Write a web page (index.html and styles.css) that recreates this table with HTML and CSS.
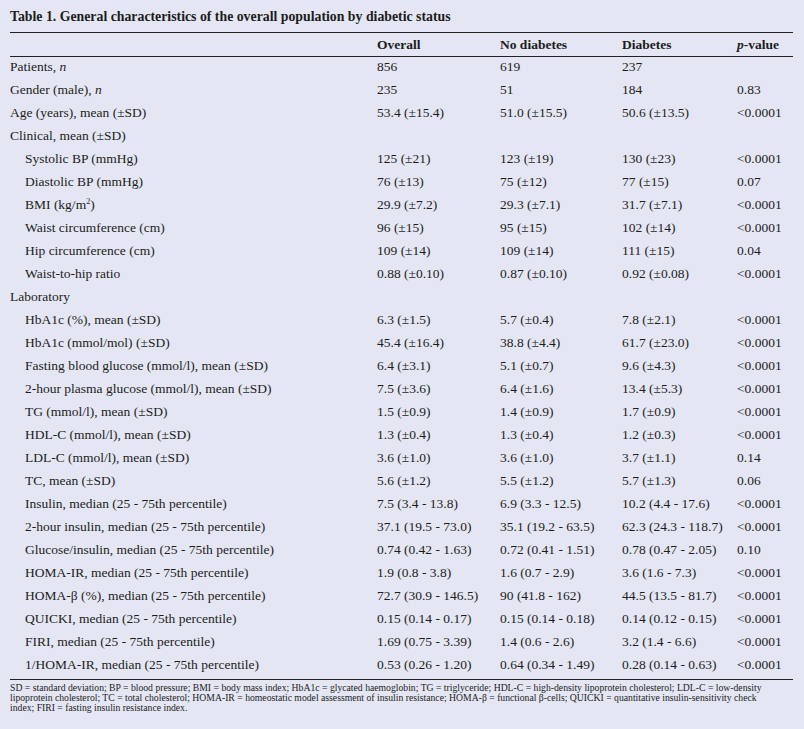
FILE: index.html
```html
<!DOCTYPE html>
<html>
<head>
<meta charset="utf-8">
<link rel="stylesheet" href="styles.css">
</head>
<body>
<div class="page">
  <h1 class="title">Table 1. General characteristics of the overall population by diabetic status</h1>
  <table class="tbl">
    <colgroup>
      <col class="c-label"><col class="c-ov"><col class="c-no"><col class="c-di"><col class="c-p">
    </colgroup>
    <thead>
      <tr><th></th><th>Overall</th><th>No diabetes</th><th>Diabetes</th><th><i>p</i>-value</th></tr>
    </thead>
    <tbody>
      <tr><td>Patients, <i>n</i></td><td>856</td><td>619</td><td>237</td><td></td></tr>
      <tr><td>Gender (male), <i>n</i></td><td>235</td><td>51</td><td>184</td><td>0.83</td></tr>
      <tr><td>Age (years), mean (±SD)</td><td>53.4 (±15.4)</td><td>51.0 (±15.5)</td><td>50.6 (±13.5)</td><td>&lt;0.0001</td></tr>
      <tr><td>Clinical, mean (±SD)</td><td></td><td></td><td></td><td></td></tr>
      <tr><td class="ind">Systolic BP (mmHg)</td><td>125 (±21)</td><td>123 (±19)</td><td>130 (±23)</td><td>&lt;0.0001</td></tr>
      <tr><td class="ind">Diastolic BP (mmHg)</td><td>76 (±13)</td><td>75 (±12)</td><td>77 (±15)</td><td>0.07</td></tr>
      <tr><td class="ind">BMI (kg/m<sup>2</sup>)</td><td>29.9 (±7.2)</td><td>29.3 (±7.1)</td><td>31.7 (±7.1)</td><td>&lt;0.0001</td></tr>
      <tr><td class="ind">Waist circumference (cm)</td><td>96 (±15)</td><td>95 (±15)</td><td>102 (±14)</td><td>&lt;0.0001</td></tr>
      <tr><td class="ind">Hip circumference (cm)</td><td>109 (±14)</td><td>109 (±14)</td><td>111 (±15)</td><td>0.04</td></tr>
      <tr><td class="ind">Waist-to-hip ratio</td><td>0.88 (±0.10)</td><td>0.87 (±0.10)</td><td>0.92 (±0.08)</td><td>&lt;0.0001</td></tr>
      <tr><td>Laboratory</td><td></td><td></td><td></td><td></td></tr>
      <tr><td class="ind">HbA1c (%), mean (±SD)</td><td>6.3 (±1.5)</td><td>5.7 (±0.4)</td><td>7.8 (±2.1)</td><td>&lt;0.0001</td></tr>
      <tr><td class="ind">HbA1c (mmol/mol) (±SD)</td><td>45.4 (±16.4)</td><td>38.8 (±4.4)</td><td>61.7 (±23.0)</td><td>&lt;0.0001</td></tr>
      <tr><td class="ind">Fasting blood glucose (mmol/l), mean (±SD)</td><td>6.4 (±3.1)</td><td>5.1 (±0.7)</td><td>9.6 (±4.3)</td><td>&lt;0.0001</td></tr>
      <tr><td class="ind">2-hour plasma glucose (mmol/l), mean (±SD)</td><td>7.5 (±3.6)</td><td>6.4 (±1.6)</td><td>13.4 (±5.3)</td><td>&lt;0.0001</td></tr>
      <tr><td class="ind">TG (mmol/l), mean (±SD)</td><td>1.5 (±0.9)</td><td>1.4 (±0.9)</td><td>1.7 (±0.9)</td><td>&lt;0.0001</td></tr>
      <tr><td class="ind">HDL-C (mmol/l), mean (±SD)</td><td>1.3 (±0.4)</td><td>1.3 (±0.4)</td><td>1.2 (±0.3)</td><td>&lt;0.0001</td></tr>
      <tr><td class="ind">LDL-C (mmol/l), mean (±SD)</td><td>3.6 (±1.0)</td><td>3.6 (±1.0)</td><td>3.7 (±1.1)</td><td>0.14</td></tr>
      <tr><td class="ind">TC, mean (±SD)</td><td>5.6 (±1.2)</td><td>5.5 (±1.2)</td><td>5.7 (±1.3)</td><td>0.06</td></tr>
      <tr><td class="ind">Insulin, median (25 - 75th percentile)</td><td>7.5 (3.4 - 13.8)</td><td>6.9 (3.3 - 12.5)</td><td>10.2 (4.4 - 17.6)</td><td>&lt;0.0001</td></tr>
      <tr><td class="ind">2-hour insulin, median (25 - 75th percentile)</td><td>37.1 (19.5 - 73.0)</td><td>35.1 (19.2 - 63.5)</td><td>62.3 (24.3 - 118.7)</td><td>&lt;0.0001</td></tr>
      <tr><td class="ind">Glucose/insulin, median (25 - 75th percentile)</td><td>0.74 (0.42 - 1.63)</td><td>0.72 (0.41 - 1.51)</td><td>0.78 (0.47 - 2.05)</td><td>0.10</td></tr>
      <tr><td class="ind">HOMA-IR, median (25 - 75th percentile)</td><td>1.9 (0.8 - 3.8)</td><td>1.6 (0.7 - 2.9)</td><td>3.6 (1.6 - 7.3)</td><td>&lt;0.0001</td></tr>
      <tr><td class="ind">HOMA-β (%), median (25 - 75th percentile)</td><td>72.7 (30.9 - 146.5)</td><td>90 (41.8 - 162)</td><td>44.5 (13.5 - 81.7)</td><td>&lt;0.0001</td></tr>
      <tr><td class="ind">QUICKI, median (25 - 75th percentile)</td><td>0.15 (0.14 - 0.17)</td><td>0.15 (0.14 - 0.18)</td><td>0.14 (0.12 - 0.15)</td><td>&lt;0.0001</td></tr>
      <tr><td class="ind">FIRI, median (25 - 75th percentile)</td><td>1.69 (0.75 - 3.39)</td><td>1.4 (0.6 - 2.6)</td><td>3.2 (1.4 - 6.6)</td><td>&lt;0.0001</td></tr>
      <tr><td class="ind">1/HOMA-IR, median (25 - 75th percentile)</td><td>0.53 (0.26 - 1.20)</td><td>0.64 (0.34 - 1.49)</td><td>0.28 (0.14 - 0.63)</td><td>&lt;0.0001</td></tr>
    </tbody>
  </table>
  <p class="note">SD = standard deviation; BP = blood pressure; BMI = body mass index; HbA1c = glycated haemoglobin; TG = triglyceride; HDL-C = high-density lipoprotein cholesterol; LDL-C = low-density<br>lipoprotein cholesterol; TC = total cholesterol; HOMA-IR = homeostatic model assessment of insulin resistance; HOMA-β = functional β-cells; QUICKI = quantitative insulin-sensitivity check<br>index; FIRI = fasting insulin resistance index.</p>
</div>
</body>
</html>
```

FILE: styles.css
```css
html, body {
  margin: 0;
  padding: 0;
  background: #e4e7f3;
}
.page {
  width: 804px;
  height: 729px;
  box-sizing: border-box;
  padding: 9px 11px 0 10px;
  font-family: "Liberation Serif", "DejaVu Serif", serif;
  color: #1c1c1c;
}
.title {
  margin: 0;
  font-size: 13.8px;
  font-weight: bold;
  line-height: 16px;
  height: 23px;
}
.tbl {
  width: 783px;
  border-collapse: collapse;
  table-layout: fixed;
  font-size: 13.5px;
}
.c-label { width: 367px; }
.c-ov { width: 123px; }
.c-no { width: 122px; }
.c-di { width: 115px; }
.c-p { width: 56px; }
.tbl thead tr {
  border-top: 1.5px solid #222;
  border-bottom: 1px solid #222;
}
.tbl tbody tr:last-child {
  border-bottom: 1px solid #222;
}
.tbl th {
  text-align: left;
  font-weight: bold;
  height: 23px;
  padding: 0;
  vertical-align: middle;
}
.tbl td {
  height: 23px;
  padding: 0 0 2px;
  box-sizing: border-box;
  vertical-align: middle;
  white-space: nowrap;
}
.tbl tbody tr:last-child td {
  height: 25px;
  padding-bottom: 4px;
}
.tbl td.ind {
  padding-left: 15px;
}
.tbl sup {
  font-size: 8px;
  line-height: 0;
}
.note {
  margin: 3px 0 0;
  font-size: 9.7px;
  line-height: 10px;
  width: 790px;
  white-space: nowrap;
}
```
